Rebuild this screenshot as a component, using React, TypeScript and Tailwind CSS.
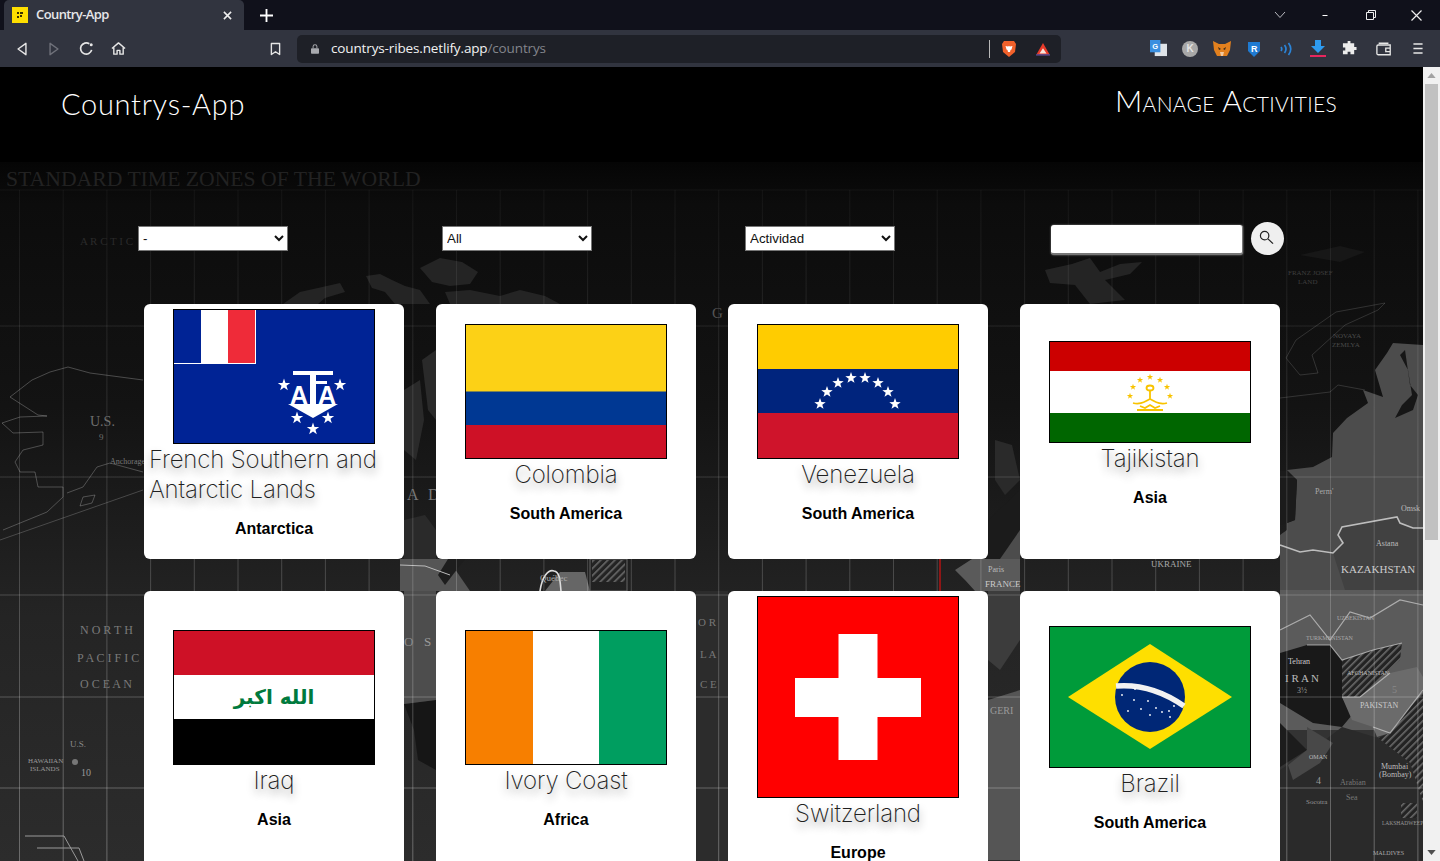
import React from "react";

const star = (cx: number, cy: number, r: number) => {
  const pts: string[] = [];
  for (let i = 0; i < 10; i++) {
    const rad = i % 2 === 0 ? r : r * 0.4;
    const a = (Math.PI / 5) * i - Math.PI / 2;
    pts.push(`${(cx + rad * Math.cos(a)).toFixed(2)},${(cy + rad * Math.sin(a)).toFixed(2)}`);
  }
  return pts.join(" ");
};

const Stars = ({ list, r, fill }: { list: number[][]; r: number; fill: string }) => (
  <>
    {list.map(([x, y], i) => (
      <polygon key={i} points={star(x, y, r)} fill={fill} />
    ))}
  </>
);

const Taaf = () => (
  <svg viewBox="0 0 200 133" className="block w-full h-full" preserveAspectRatio="none">
    <rect width="200" height="133" fill="#002395" />
    <rect width="82" height="54" fill="#fff" />
    <rect width="27" height="53" fill="#002395" />
    <rect x="27" width="27" height="53" fill="#fff" />
    <rect x="54" width="27" height="53" fill="#ef2b39" />
    <rect x="119" y="61" width="40" height="4" fill="#fff" />
    <rect x="136" y="61" width="6" height="34" fill="#fff" />
    <rect x="141" y="71" width="12" height="3" fill="#fff" />
    <text x="125" y="94" textAnchor="middle" fontSize="25" fontWeight="700" fontFamily="'Liberation Sans', sans-serif" fill="#fff">A</text>
    <text x="153" y="94" textAnchor="middle" fontSize="25" fontWeight="700" fontFamily="'Liberation Sans', sans-serif" fill="#fff">A</text>
    <polygon points="114,94 164,94 139,108" fill="#fff" />
    <Stars list={[[110, 75], [166, 75], [123, 108], [154, 108], [139, 119]]} r={6.5} fill="#fff" />
  </svg>
);

const Colombia = () => (
  <svg viewBox="0 0 200 133" className="block w-full h-full">
    <rect width="200" height="67" fill="#fcd116" />
    <rect y="66.500" width="200" height="33.500" fill="#003893" />
    <rect y="100" width="200" height="33" fill="#ce1126" />
  </svg>
);

const Venezuela = () => (
  <svg viewBox="0 0 200 133" className="block w-full h-full">
    <rect width="200" height="45" fill="#ffcc00" />
    <rect y="44" width="200" height="45" fill="#00247d" />
    <rect y="88" width="200" height="45" fill="#cf142b" />
    <Stars
      list={[[62, 79], [69, 67], [80, 58], [93, 53], [107, 53], [120, 58], [130, 67], [137, 79]]}
      r={6}
      fill="#fff"
    />
  </svg>
);

const Tajikistan = () => (
  <svg viewBox="0 0 200 100" className="block w-full h-full">
    <rect width="200" height="29" fill="#cc0000" />
    <rect y="29" width="200" height="43" fill="#fff" />
    <rect y="71" width="200" height="29" fill="#006600" />
    <Stars
      list={[[100, 35], [90, 38], [110, 38], [83, 45], [117, 45], [80, 54], [120, 54]]}
      r={3.300}
      fill="#f8c300"
    />
    <g fill="none" stroke="#f8c300" strokeWidth="1.800">
      <ellipse cx="100" cy="46" rx="3.500" ry="2.500" />
      <path d="M100 49v9M83 61c7 2 11-1 17-4 6 3 10 6 17 4M87 68h26M90 64l5 2 5-3 5 3 5-2" />
    </g>
  </svg>
);

const Iraq = () => (
  <svg viewBox="0 0 200 133" className="block w-full h-full">
    <rect width="200" height="45" fill="#ce1126" />
    <rect y="44" width="200" height="45" fill="#fff" />
    <rect y="88" width="200" height="45" fill="#000" />
    <text
      x="100"
      y="73"
      textAnchor="middle"
      direction="rtl"
      fontSize="20"
      fontWeight="700"
      fontFamily="'DejaVu Sans', sans-serif"
      fill="#007a3d"
    >
      الله اكبر
    </text>
  </svg>
);

const Ivory = () => (
  <svg viewBox="0 0 200 133" className="block w-full h-full">
    <rect width="67" height="133" fill="#f77f00" />
    <rect x="67" width="66" height="133" fill="#fff" />
    <rect x="133" width="67" height="133" fill="#009e60" />
  </svg>
);

const Swiss = () => (
  <svg viewBox="0 0 200 200" className="block w-full h-full">
    <rect width="200" height="200" fill="#ff0000" />
    <rect x="37" y="81" width="126" height="39" fill="#fff" />
    <rect x="80.500" y="37" width="39" height="126" fill="#fff" />
  </svg>
);

const Brazil = () => (
  <svg viewBox="0 0 200 140" className="block w-full h-full">
    <rect width="200" height="140" fill="#009b3a" />
    <polygon points="18,70 100,17 182,70 100,122" fill="#fedf00" />
    <circle cx="100" cy="70" r="35" fill="#002776" />
    <path d="M66 59c24-2 48 6 68 20" fill="none" stroke="#f2f2f2" strokeWidth="5.500" />
    <g fill="#fff">
      {[[72, 68], [84, 73], [91, 82], [100, 88], [112, 85], [119, 84], [124, 79], [98, 74], [106, 81], [78, 84], [120, 90], [85, 62]].map(
        ([x, y], i) => (
          <circle key={i} cx={x} cy={y} r="0.900" />
        ),
      )}
    </g>
  </svg>
);

type CountryCard = { name: string; continent: string; h: string; flag: React.ReactNode };

const countries: CountryCard[] = [
  { name: "French Southern and Antarctic Lands", continent: "Antarctica", h: "h-[135px]", flag: <Taaf /> },
  { name: "Colombia", continent: "South America", h: "h-[135px]", flag: <Colombia /> },
  { name: "Venezuela", continent: "South America", h: "h-[135px]", flag: <Venezuela /> },
  { name: "Tajikistan", continent: "Asia", h: "h-[102px]", flag: <Tajikistan /> },
  { name: "Iraq", continent: "Asia", h: "h-[135px]", flag: <Iraq /> },
  { name: "Ivory Coast", continent: "Africa", h: "h-[135px]", flag: <Ivory /> },
  { name: "Switzerland", continent: "Europe", h: "h-[202px]", flag: <Swiss /> },
  { name: "Brazil", continent: "South America", h: "h-[142px]", flag: <Brazil /> },
];

const vLines = Array.from({ length: 33 }, (_, i) => 19.5 + i * 43.7);

const labels: [string, number, number, number, string?][] = [
  ["STANDARD TIME ZONES OF THE WORLD", 6, 186, 21.700, "#222"],
  ["A R C T I C", 80, 245, 11, "#2a2a2a"],
  ["U.S.", 90, 426, 14, "#6e6e6e"],
  ["9", 99, 440, 9, "#6e6e6e"],
  ["Anchorage", 110, 464, 8, "#777"],
  ["N O R T H", 80, 634, 12, "#7a7a7a"],
  ["P A C I F I C", 77, 662, 12, "#7a7a7a"],
  ["O C E A N", 80, 688, 12, "#7a7a7a"],
  ["U.S.", 70, 747, 9, "#8a8a8a"],
  ["HAWAIIAN", 28, 763, 7, "#9a9a9a"],
  ["ISLANDS", 30, 771, 7, "#9a9a9a"],
  ["10", 81, 776, 10, "#9a9a9a"],
  ["S", 424, 646, 13, "#9a9a9a"],
  ["O", 404, 646, 13, "#8a8a8a"],
  ["A", 407, 500, 16, "#777"],
  ["D", 428, 500, 16, "#777"],
  ["Québec", 540, 581, 9, "#aaa"],
  ["Paris", 988, 572, 8, "#bbb"],
  ["FRANCE", 985, 587, 9, "#ccc"],
  ["UKRAINE", 1151, 567, 9, "#aaa"],
  ["G", 712, 318, 15, "#555"],
  ["O R", 698, 626, 11, "#777"],
  ["L A", 700, 658, 11, "#777"],
  ["C E", 700, 688, 11, "#777"],
  ["GERI", 990, 714, 10, "#999"],
  ["FRANZ JOSEF", 1288, 275, 7, "#3e3e3e"],
  ["LAND", 1298, 284, 7, "#3e3e3e"],
  ["NOVAYA", 1333, 338, 7, "#4a4a4a"],
  ["ZEMLYA", 1332, 347, 7, "#4a4a4a"],
  ["Perm'", 1315, 494, 8, "#aaa"],
  ["Omsk", 1401, 511, 8, "#bbb"],
  ["Astana", 1376, 546, 8, "#bbb"],
  ["KAZAKHSTAN", 1341, 573, 11, "#ccc"],
  ["UZBEKISTAN", 1337, 620, 6, "#aaa"],
  ["TURKMENISTAN", 1306, 640, 6, "#aaa"],
  ["Tehran", 1288, 664, 8, "#ccc"],
  ["I R A N", 1285, 682, 11, "#bbb"],
  ["3½", 1297, 693, 8, "#999"],
  ["AFGHANISTAN", 1347, 675, 6, "#bbb"],
  ["PAKISTAN", 1360, 708, 8, "#ccc"],
  ["5", 1392, 693, 10, "#888"],
  ["OMAN", 1309, 759, 6, "#bbb"],
  ["4", 1316, 784, 10, "#999"],
  ["Arabian", 1340, 785, 8, "#777"],
  ["Sea", 1346, 800, 8, "#777"],
  ["Mumbai", 1381, 769, 8, "#bbb"],
  ["(Bombay)", 1379, 777, 8, "#bbb"],
  ["Socotra", 1306, 804, 7, "#999"],
  ["LAKSHADWEEP", 1382, 825, 5.500, "#999"],
  ["MALDIVES", 1373, 855, 6, "#aaa"],
];

const WorldMap = () => (
  <svg
    className="absolute left-0 top-0 w-[1423px] h-[794px]"
    viewBox="0 67 1423 794"
    aria-hidden="true"
  >
    <defs>
      <linearGradient id="sea" x1="0" y1="162" x2="0" y2="861" gradientUnits="userSpaceOnUse">
        <stop offset="0" stopColor="#050505" />
        <stop offset="0.06" stopColor="#0c0c0c" />
        <stop offset="0.35" stopColor="#131313" />
        <stop offset="0.65" stopColor="#242424" />
        <stop offset="1" stopColor="#2c2c2c" />
      </linearGradient>
      <linearGradient id="grid" x1="0" y1="162" x2="0" y2="861" gradientUnits="userSpaceOnUse">
        <stop offset="0" stopColor="#fff" stopOpacity="0.03" />
        <stop offset="0.4" stopColor="#fff" stopOpacity="0.13" />
        <stop offset="1" stopColor="#fff" stopOpacity="0.3" />
      </linearGradient>
      <pattern id="hatch" width="5" height="5" patternUnits="userSpaceOnUse" patternTransform="rotate(45)">
        <rect width="5" height="5" fill="#232323" />
        <rect width="1.600" height="5" fill="#6a6a6a" />
      </pattern>
    </defs>
    <rect x="0" y="67" width="1423" height="794" fill="url(#sea)" />
    <rect x="0" y="67" width="1423" height="95" fill="#000" />

    {/* arctic islands */}
    <g fill="#242424">
      <polygon points="283,304 300,292 318,288 340,283 345,292 325,298 318,304" />
      <polygon points="366,276 380,274 392,280 405,286 420,290 430,304 395,304 385,292 372,288" />
      <polygon points="420,268 440,258 462,262 478,272 470,284 450,286 432,282" />
      <polygon points="445,292 470,290 500,296 520,290 545,296 560,304 450,304" />
      <polygon points="1045,270 1072,264 1090,258 1100,272 1120,264 1142,262 1130,274 1105,280 1125,300 1090,304 1075,285 1050,283" />
    </g>
    <path d="M1300 255 1340 246 1365 252 1340 262Z" fill="#171717" />

    {/* alaska */}
    <g fill="none" stroke="#fff" strokeOpacity="0.24" strokeWidth="1">
      <path d="M10 397 32 380 50 372 68 367 90 373 143 380M10 397 38 415 47 416 20 417 2 423 13 433 43 432 43 445 23 450 15 462 20 472 35 472 38 487 63 487 63 497 47 512 3 530M67 493 83 487 97 467 110 463 143 472" />
      <path d="M83 497 95 495 92 503 80 506Z" />
    </g>
    <path d="M0 540 143 490" stroke="#fff" strokeOpacity="0.2" />
    <g fill="none" stroke="#fff" strokeOpacity="0.14" strokeWidth="1">
      <path d="M1385 303 1378 310 1345 325 1312 355 1318 373 1300 375 1286 358 1296 340 1336 312Z" />
      <path d="M1280 398 1330 392 1338 385 1365 390" />
    </g>

    {/* russia and central asia */}
    <polygon
      fill="#4c4c4c"
      points="1393,343 1387,353 1375,370 1383,397 1363,390 1368,403 1347,418 1333,433 1332,457 1313,467 1287,470 1297,480 1295,520 1287,523 1287,530 1280,535 1280,590 1423,590 1423,345"
    />
    <polygon fill="#161616" points="1405,350 1410,385 1418,395 1413,410 1395,418 1402,405 1412,395 1408,370 1400,355" />
    <polygon fill="#1b1b1b" points="1280,471 1287,471 1297,480 1295,520 1287,523 1280,525" />
    <polygon fill="#414141" points="1333,553 1343,543 1338,535 1342,527 1397,517 1400,523 1413,528 1423,528 1423,590 1345,590" />
    <polyline
      fill="none"
      stroke="#bdbdbd"
      strokeWidth="1.600"
      points="1280,545 1300,552 1313,550 1333,553 1343,543 1338,535 1342,527 1397,517 1400,523 1413,528 1423,528"
    />
    <polygon fill="#5b5b5b" points="1280,590 1423,590 1423,730 1280,730" />
    <polygon fill="#333" points="1280,730 1423,730 1423,861 1280,861" />
    <polygon fill="#191919" points="1280,653 1307,645 1330,645 1342,660 1342,697 1352,715 1342,727 1313,723 1280,703" />
    <polygon fill="url(#hatch)" points="1342,660 1373,650 1402,643 1400,660 1380,677 1360,697 1342,697" />
    <polygon fill="#6b6b6b" points="1342,697 1360,697 1390,673 1417,667 1423,677 1423,690 1390,733 1377,737 1373,727 1352,720" />
    <polygon fill="url(#hatch)" points="1390,733 1423,690 1423,803 1410,763 1378,738" />
    <polygon fill="#2a2a2a" points="1342,727 1378,738 1410,763 1423,803 1423,861 1280,861 1280,770 1325,740" />
    <polygon fill="#1c1c1c" points="1280,723 1307,750 1280,767" />
    <polygon fill="#484848" points="1307,727 1333,743 1320,763 1293,780 1288,765 1307,750" />
    <g fill="none" stroke="#cfcfcf" strokeOpacity="0.7" strokeWidth="1.200">
      <path d="M1280 630 1310 615 1330 640 1350 612 1370 618 1400 600 1423 605" />
      <path d="M1307 645 1330 645 1342 660 1373 650 1402 643" />
      <path d="M1342 697 1360 697 1390 673" />
      <path d="M1373 727 1390 733 1423 690" />
    </g>
    <rect x="1401" y="803" width="16" height="15" fill="url(#hatch)" />

    {/* bits showing between the cards */}
    <polygon fill="#555" points="400,559 448,559 470,591 400,591" />
    <polygon fill="#1d1d1d" points="448,559 465,559 445,585 438,575" />
    <polyline fill="none" stroke="#bbb" strokeWidth="1" points="400,565 425,566 450,575" />
    <polygon fill="#666" points="560,572 585,572 590,591 545,591" />
    <path d="M540 591c2-14 8-22 14-20 6 1 6 10 7 20" fill="none" stroke="#ddd" strokeWidth="1.600" />
    <rect x="592" y="560" width="33" height="22" fill="url(#hatch)" />
    <rect x="590" y="559" width="37" height="32" fill="none" stroke="#666" />
    <rect x="939" y="559" width="2" height="32" fill="#8f1616" />
    <polygon fill="#5a5a5a" points="955,570 972,559 1020,559 1020,591 975,591 965,580" />
    <polygon fill="#1b1b1b" points="988,520 1020,490 1020,540 1000,559 972,559" />
    <polygon fill="#4c4c4c" points="1000,559 1020,530 1020,559" />
    <polygon fill="#161616" points="404,704 436,700 436,770 418,760 414,730" />
    <polygon fill="#4d4d4d" points="404,591 436,591 436,700 404,704" />
    <polygon fill="#3c3c3c" points="988,591 1020,591 1020,640 1000,670 988,660" />
    <polygon fill="#555" points="988,700 1020,690 1020,860 988,860" />
    <polygon fill="#2c2c2c" points="696,591 728,591 728,861 696,861" />
    <g fill="#2a2a2a">
      <polygon points="404,520 425,515 436,530 436,559 404,559" />
      <polygon points="404,390 420,380 424,420 416,460 404,450" />
      <polygon points="422,360 436,350 436,420 428,410" />
      <polygon points="995,440 1012,445 1020,480 1005,495 995,480" />
    </g>

    {vLines.map((x) => (
      <line key={x} x1={x} x2={x} y1="190" y2="861" stroke="url(#grid)" strokeWidth="1" />
    ))}
    {[190, 326, 477, 595, 697, 788].map((y) => (
      <line key={y} x1="0" x2="1423" y1={y} y2={y} stroke="url(#grid)" strokeWidth="1" />
    ))}
    <path d="M25 836h39l14 25M37 848h42l5 13" fill="none" stroke="#9a9a9a" />
    <circle cx="75" cy="762" r="3" fill="#777" />

    {labels.map(([text, x, y, size, fill]) => (
      <text key={text + x} x={x} y={y} fontSize={size} fill={fill} fontFamily="'Liberation Serif', serif">
        {text}
      </text>
    ))}
  </svg>
);

const TabStrip = () => (
  <div className="flex h-[30px] items-end bg-[#10111b]">
    <div className="ml-1 flex h-[30px] w-[240px] items-center rounded-t-[5px] bg-[#31343f] pl-2 pr-1">
      <span className="flex h-4 w-4 items-center justify-center bg-[#ffdf00]">
        <svg viewBox="0 0 16 16" className="h-4 w-4" fill="#3a3000">
          <rect x="5" y="5" width="2" height="2" />
          <rect x="5" y="9" width="2" height="2" />
          <rect x="8" y="5" width="3" height="2" />
          <rect x="8" y="8" width="2" height="2" />
        </svg>
      </span>
      <span className="ml-2 text-[13px] font-semibold text-[#e6e6e9] font-['Open_Sans',sans-serif] tracking-[-0.6px]">Country-App</span>
      <svg viewBox="0 0 10 10" className="ml-auto mr-2 h-[9px] w-[9px]" stroke="#eee" strokeWidth="1.700">
        <path d="M1 1l8 8M9 1l-8 8" />
      </svg>
    </div>
    <svg viewBox="0 0 14 14" className="mb-2 ml-4 h-[13px] w-[13px]" stroke="#fff" strokeWidth="2">
      <path d="M7 0v14M0 7h14" />
    </svg>
    <div className="ml-auto flex h-[30px] items-center text-white">
      <svg viewBox="0 0 12 8" className="mr-[34px] h-[8px] w-[12px]" fill="none" stroke="#b9bac0" strokeWidth="1">
        <path d="M1 1l5 5.500L11 1" />
      </svg>
      <svg viewBox="0 0 10 2" className="mr-[35px] h-px w-[10px]" fill="#fff">
        <rect width="10" height="2" />
      </svg>
      <svg viewBox="0 0 10 10" className="mr-[35px] ml-px h-[10px] w-[10px]" fill="none" stroke="#eee" strokeWidth="1">
        <path d="M.5 2.500h7v7h-7zM2.500 2.500v-2h7v7h-2" />
      </svg>
      <svg viewBox="0 0 11 11" className="mr-[18px] h-[11px] w-[11px]" stroke="#eee" strokeWidth="1.200">
        <path d="M.5.5l10 10M10.500.5l-10 10" />
      </svg>
    </div>
  </div>
);

const Toolbar = () => (
  <div className="flex h-[37px] items-center bg-[#31343f]">
    <div className="flex w-[297px] items-center">
      <svg viewBox="0 0 12 16" className="ml-4 h-[14px] w-[12px]" fill="none" stroke="#e6e6e6" strokeWidth="1.600" strokeLinejoin="round">
        <path d="M10.500 1.500v13L1.500 8z" />
      </svg>
      <svg viewBox="0 0 12 16" className="ml-5 h-[14px] w-[12px]" fill="none" stroke="#6f717a" strokeWidth="1.600" strokeLinejoin="round">
        <path d="M1.500 1.500v13l9-6.500z" />
      </svg>
      <svg viewBox="0 0 16 16" className="ml-[19px] h-[15px] w-[15px]" fill="none" stroke="#e6e6e6" strokeWidth="1.800">
        <path d="M13.500 9.500A6 6 0 1 1 11 3" />
        <circle cx="13" cy="4" r="1.600" fill="#e6e6e6" stroke="none" />
      </svg>
      <svg viewBox="0 0 16 16" className="ml-[17px] h-[15px] w-[15px]" fill="none" stroke="#e6e6e6" strokeWidth="1.500" strokeLinejoin="round">
        <path d="M1 8l7-6 7 6M3 7v7h3.500v-4h3v4H13V7" />
      </svg>
      <svg viewBox="0 0 12 14" className="ml-[144px] h-[14px] w-[11px]" fill="none" stroke="#e6e6e6" strokeWidth="1.500" strokeLinejoin="round">
        <path d="M1.500 1h9v12L6 10l-4.500 3z" />
      </svg>
    </div>
    <div className="flex h-[28px] w-[764px] items-center rounded-[5px] bg-[#1e2027]">
      <svg viewBox="0 0 10 12" className="ml-[14px] h-[10px] w-[8px]" fill="#a8a9ae">
        <rect x="0" y="5" width="10" height="7" rx="1" />
        <path d="M2 5V3a3 3 0 0 1 6 0v2H6.800V3a1.800 1.800 0 0 0-3.600 0v2z" />
      </svg>
      <span className="ml-3 text-[13.500px] text-[#f2f2f2] font-['Open_Sans',sans-serif] tracking-[-0.14px]">
        countrys-ribes.netlify.app<span className="text-[#83858c]">/countrys</span>
      </span>
      <span className="ml-auto h-[18px] w-px bg-[#b9b9b9]" />
      <svg viewBox="0 0 16 18" className="ml-[11px] h-[18px] w-[16px]">
        <path d="M3 1h10l2 3-1 8-6 5-6-5-1-8z" fill="#f1612b" />
        <path d="M4.500 6l2.500.5L8 6l1 .5L11.500 6l-1 3.500-1 .5-.5 2h-2l-.5-2-1-.5z" fill="#fff" />
      </svg>
      <svg viewBox="0 0 18 16" className="ml-[18px] mr-[10px] h-[14px] w-[16px]">
        <polygon points="9,1 17,15 1,15" fill="#e83b2a" />
        <polygon points="9,7 13,13 5,13" fill="#f6e7dd" />
        <rect x="1" y="14" width="16" height="1.500" fill="#3a4a9a" />
      </svg>
    </div>
    <div className="flex items-center">
      <svg viewBox="0 0 18 18" className="ml-[89px] h-[17px] w-[17px]">
        <rect x="5" y="4" width="13" height="13" fill="#dfe3e8" />
        <rect x="0" y="0" width="11" height="13" fill="#3a8fe0" />
        <text x="2.500" y="10" fontSize="8" fontWeight="700" fill="#fff" fontFamily="'Liberation Sans', sans-serif">G</text>
      </svg>
      <span className="ml-[15px] flex h-4 w-4 items-center justify-center rounded-full bg-[#a8a8a8] text-[10px] font-bold text-[#e4e4e4] font-['Liberation_Sans',sans-serif]">K</span>
      <svg viewBox="0 0 18 16" className="ml-[15px] h-[16px] w-[18px]">
        <polygon points="0,0 6,3 12,3 18,0 17,9 14,15 4,15 1,9" fill="#e2801e" />
        <polygon points="5,6 8,8 6,9" fill="#3a2a1a" />
        <polygon points="13,6 10,8 12,9" fill="#3a2a1a" />
        <polygon points="7,11 11,11 10,15 8,15" fill="#f3c9a0" />
      </svg>
      <svg viewBox="0 0 12 16" className="ml-[17px] h-[16px] w-[12px]">
        <path d="M0 1h12v9l-6 6-6-6z" fill="#1f7ad1" />
        <text x="3" y="10.500" fontSize="9" fontWeight="700" fill="#fff" fontFamily="'Liberation Sans', sans-serif">R</text>
      </svg>
      <svg viewBox="0 0 14 14" className="ml-[19px] h-[14px] w-[14px]" fill="none" stroke="#2b84d8" strokeWidth="1.700">
        <path d="M2 5q1.500 2 0 4M5.500 3q3 4 0 8M9.500 1q4.500 6 0 12" />
      </svg>
      <svg viewBox="0 0 16 17" className="ml-[17px] h-[17px] w-[16px]">
        <path d="M5 0h6v6h4l-7 7-7-7h4z" fill="#2e9bf0" />
        <rect x="0" y="15" width="16" height="2" fill="#e8265e" />
      </svg>
      <svg viewBox="0 0 16 16" className="ml-[16px] h-[15px] w-[15px]" fill="#ececec">
        <path d="M6 0h3v2.500h4v4h2.500v3H13V14H9v-2.500H6V14H1v-4h2.500V7H1V2.500h5z" />
      </svg>
      <svg viewBox="0 0 18 15" className="ml-[19px] h-[14px] w-[16px]" fill="none" stroke="#e6e6e6" strokeWidth="1.500">
        <path d="M16 3H2.500A1.500 1.500 0 0 0 1 4.500v8A1.500 1.500 0 0 0 2.500 14H16zM16 6.500h-5v4h5M3 1h11" />
      </svg>
      <svg viewBox="0 0 10 12" className="ml-[21px] h-[11px] w-[10px]" stroke="#e6e6e6" strokeWidth="1.600">
        <path d="M0 1h10M0 6h10M0 11h10" />
      </svg>
    </div>
  </div>
);

const filterSelect =
  "h-[25px] w-[150px] shrink-0 border border-[#767676] bg-white text-[13.330px] text-[#111] font-['Liberation_Sans',sans-serif]";

const Filters = () => (
  <div className="flex h-[34px] items-center pl-[138px]">
    <select className={filterSelect} defaultValue="-">
      <option>-</option>
      <option>A-Z</option>
      <option>Z-A</option>
    </select>
    <select className={`ml-[154px] ${filterSelect}`} defaultValue="All">
      <option>All</option>
      <option>Asia</option>
      <option>Europe</option>
    </select>
    <select className={`ml-[153px] ${filterSelect}`} defaultValue="Actividad">
      <option>Actividad</option>
    </select>
    <div className="ml-[156px] flex items-center gap-2">
      <input
        type="text"
        className="mt-[4px] h-[30px] w-[192px] rounded-[3px] border-b-2 border-r border-[#777] bg-white shadow-[0_0_2px_#999]"
      />
      <button type="button" className="flex h-[33px] w-[33px] items-center justify-center rounded-full bg-[#efefef]">
        <svg viewBox="0 0 16 16" className="-mt-[2px] -ml-[2px] h-[15px] w-[15px]" fill="none" stroke="#222" strokeWidth="1.300">
          <circle cx="6" cy="6" r="4.500" />
          <path d="M9.500 9.500l5.500 5" />
        </svg>
      </button>
    </div>
  </div>
);

const Card = ({ country }: { country: CountryCard }) => (
  <div className="flex flex-col items-center justify-center rounded-[6px] bg-white px-[5px] py-[5px]">
    <div className={`w-[202px] shrink-0 border border-black ${country.h}`}>{country.flag}</div>
    <h2 className="mt-px text-[24px] leading-[30px] font-extralight tracking-[-0.15px] text-[#1f1f1f] font-['Inter',sans-serif] [text-shadow:0_5px_8px_rgba(0,0,0,0.45)]">
      {country.name}
    </h2>
    <p className="mb-[13px] mt-[12px] text-[16px] leading-[24px] font-bold text-black font-['Liberation_Sans',sans-serif]">
      {country.continent}
    </p>
  </div>
);

const Scrollbar = () => (
  <div className="flex w-[17px] flex-col items-center bg-[#f1f1f1]">
    <svg viewBox="0 0 10 6" className="mt-[6px] h-[5px] w-[9px]" fill="#a3a3a3">
      <path d="M5 0l5 6H0z" />
    </svg>
    <div className="mt-[6px] h-[456px] w-[13px] bg-[#c1c1c1]" />
    <svg viewBox="0 0 10 6" className="mb-[6px] mt-auto h-[5px] w-[9px]" fill="#505050">
      <path d="M5 6L0 0h10z" />
    </svg>
  </div>
);

export default function App() {
  return (
    <div className="flex h-[861px] w-[1440px] flex-col overflow-hidden bg-black">
      <TabStrip />
      <Toolbar />
      <div className="flex min-h-0 flex-1">
        <main className="relative w-[1423px] overflow-hidden">
          <WorldMap />
          <div className="relative">
            <nav className="flex h-[95px] items-center justify-between pb-[22px] pl-[61px] pr-[86px] text-white">
              <span className="text-[29px] font-light tracking-[0.7px] font-['Lato',sans-serif]">Countrys-App</span>
              <span className="mb-[6px] text-[30px] font-light tracking-[0.3px] [font-variant-caps:small-caps] font-['Lato',sans-serif]">
                Manage Activities
              </span>
            </nav>
            <div className="pt-[59px]">
              <Filters />
            </div>
            <div className="ml-[144px] mt-[49px] grid w-[1136px] grid-cols-4 gap-8">
              {countries.map((c) => (
                <Card key={c.name} country={c} />
              ))}
            </div>
          </div>
        </main>
        <Scrollbar />
      </div>
    </div>
  );
}
